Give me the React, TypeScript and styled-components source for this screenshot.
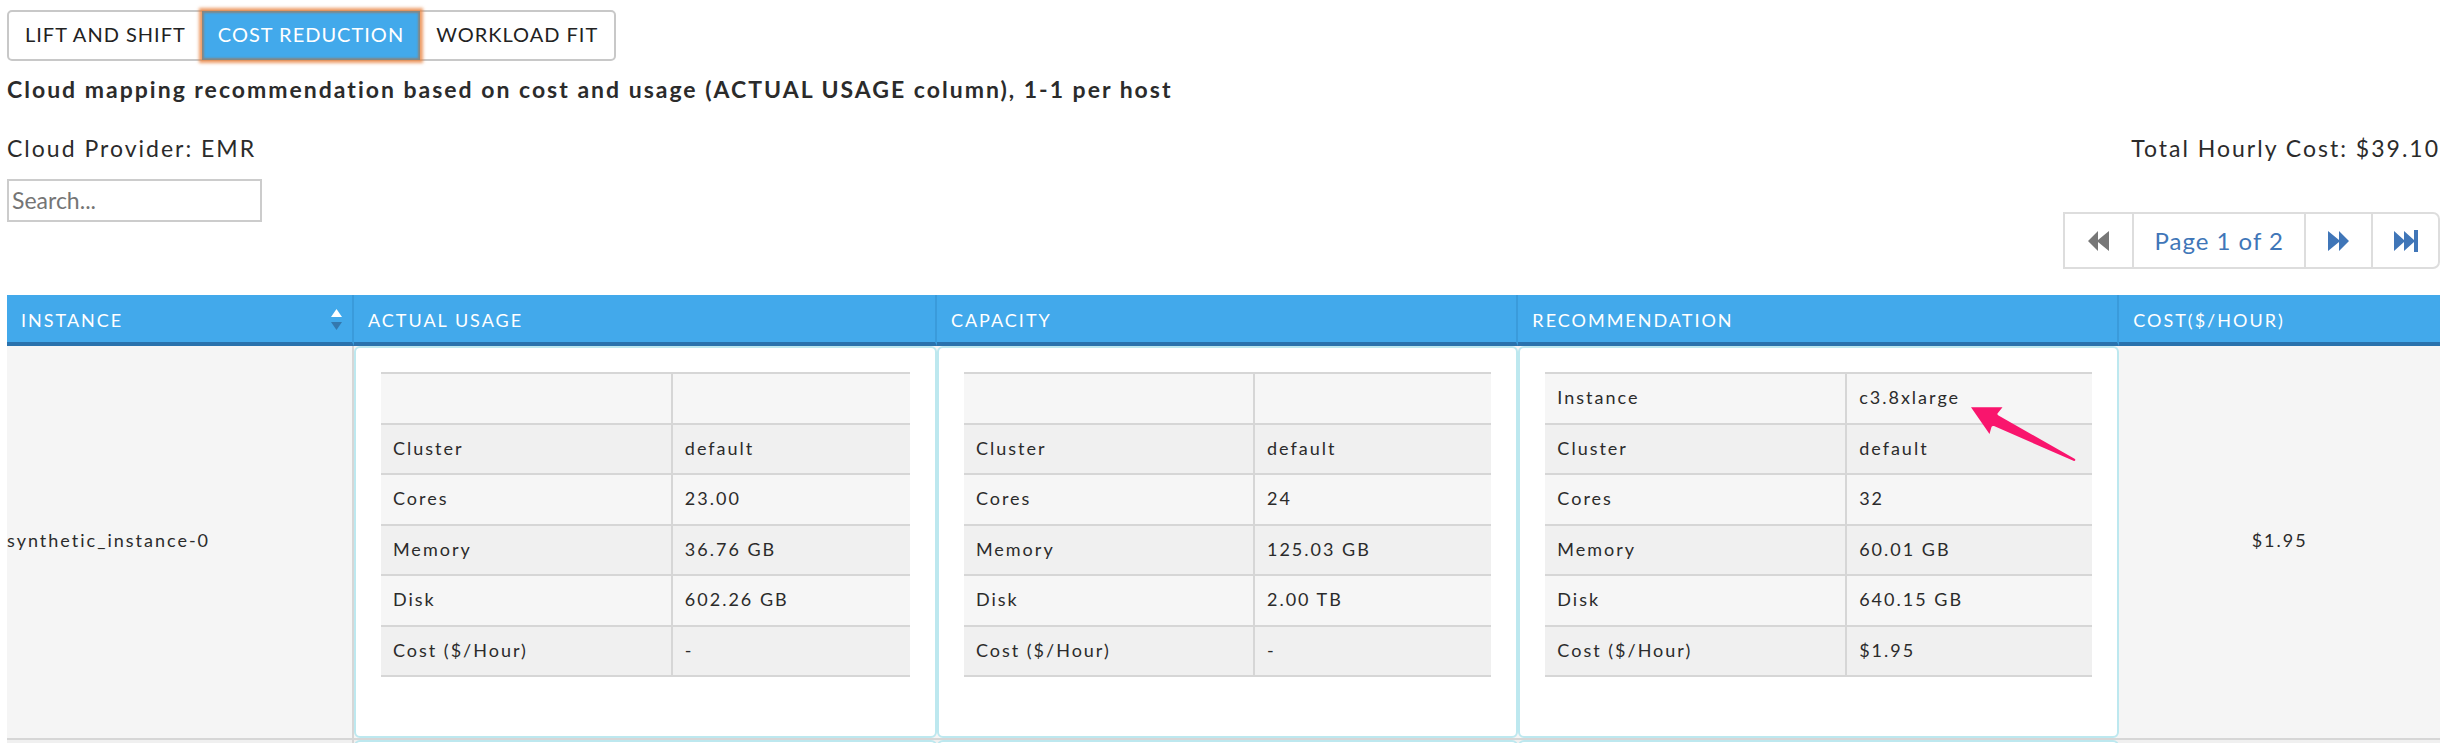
import React from "react";
import styled, { createGlobalStyle } from "styled-components";

const GlobalStyle = createGlobalStyle`
  *, *::before, *::after { box-sizing: border-box; }
  body {
    margin: 0;
    background: #fff;
    color: #2b2b2b;
    font-family: Lato, "Open Sans", sans-serif;
    font-size: 23px;
  }
`;

const Page = styled.main`
  height: 100vh;
  overflow: hidden;
  padding: 10px 8px 0 7px;
  letter-spacing: 2px;
`;

const Tabs = styled.div`
  display: inline-flex;
  height: 51px;
  border: 2px solid #c8c8c8;
  border-radius: 5px;
`;

const Tab = styled.button<{ $active?: boolean }>`
  position: relative;
  margin: ${(p) => (p.$active ? "-1px 0" : "0")};
  padding: 0 16px 3px;
  border: 0;
  background: ${(p) => (p.$active ? "#42a9eb" : "transparent")};
  color: ${(p) => (p.$active ? "#fff" : "#222")};
  font: inherit;
  font-size: 20px;
  letter-spacing: 1px;
  box-shadow: ${(p) =>
    p.$active ? "0 0 3px 3px rgba(232, 132, 66, 0.8), inset 0 0 2px 2px rgba(140, 130, 120, 0.9)" : "none"};
`;

const Heading = styled.h1`
  margin: 12px 0 0;
  font-size: 23px;
  line-height: 32px;
  font-weight: 700;
`;

const Summary = styled.div`
  display: flex;
  justify-content: space-between;
  margin-top: 27px;
  line-height: 32px;
`;

const Toolbar = styled.div`
  display: flex;
  justify-content: space-between;
  align-items: flex-start;
  margin-top: 15px;
`;

const Search = styled.input`
  width: 255px;
  height: 43px;
  padding: 0 3px 2px;
  border: 2px solid #ccc;
  font: inherit;
  &::placeholder { color: #757575; opacity: 1; }
`;

const Pager = styled.nav`
  display: flex;
  height: 57px;
  margin-top: 33px;
  border: 2px solid #ddd;
  border-radius: 0 7px 7px 0;
`;

const PagerItem = styled.button<{ $muted?: boolean }>`
  display: flex;
  align-items: center;
  justify-content: center;
  min-width: 67px;
  padding: 0 20px;
  border: 0;
  border-left: 2px solid #ddd;
  background: transparent;
  color: ${(p) => (p.$muted ? "#777" : "#4076b8")};
  font: inherit;
  font-size: 24px;
  letter-spacing: 1px;
  &:first-child { border-left: 0; }
`;

const PagerIcon = styled.svg`
  display: block;
  fill: currentColor;
`;

const Grid = styled.table`
  width: 100%;
  margin-top: 26px;
  table-layout: fixed;
  border-collapse: separate;
  border-spacing: 0;
  font-size: 18px;
`;

const Col = styled.col<{ $share: string }>`
  width: ${(p) => p.$share};
`;

const HeadCell = styled.th`
  height: 51px;
  padding: 2px 10px 0 14px;
  border-right: 2px solid #3a9bdb;
  border-bottom: 4px solid #2a72ad;
  background: #42a9eb;
  color: #fff;
  font-weight: 400;
  text-align: left;
  text-transform: uppercase;
  &:last-child { border-right: 0; }
`;

const HeadLabel = styled.div`
  display: flex;
  justify-content: space-between;
  align-items: center;
`;

const BodyCell = styled.td<{ $align?: string; $ruled?: boolean; $alt?: boolean }>`
  height: 394px;
  padding: 0;
  background: ${(p) => (p.$alt ? "#f0f0f0" : "#f5f5f5")};
  border-bottom: 2px solid #d6d6d6;
  border-right: ${(p) => (p.$ruled ? "2px solid #d6d6d6" : "0")};
  text-align: ${(p) => p.$align || "left"};
`;

const CellText = styled.div`
  padding-bottom: 4px;
`;

const Card = styled.div`
  height: 392px;
  padding: 24px 25px 0;
  background: #fff;
  border: 2px solid #bde8ef;
  border-radius: 6px;
`;

const Specs = styled.table`
  width: 100%;
  height: 305px;
  table-layout: fixed;
  border-collapse: collapse;
`;

const SpecRow = styled.tr`
  height: 50px;
  background: #f6f6f6;
  border-top: 2px solid #d6d6d6;
  &:nth-child(even) { background: #f0f0f0; }
  &:last-child { border-bottom: 2px solid #d6d6d6; }
`;

const SpecName = styled.th`
  width: 55%;
  padding: 0 12px 2px;
  border-right: 2px solid #d6d6d6;
  font-weight: 400;
  text-align: left;
`;

const SpecValue = styled.td`
  padding: 0 12px 2px;
`;

const ValueWithPointer = styled.div`
  position: relative;
`;

const Pointer = styled.svg`
  position: absolute;
  left: 111px;
  top: 20px;
`;

type Spec = [string, string];
interface Row {
  instance: string;
  cost: string;
  specs: Spec[][];
}

const columns = [
  { title: "Instance", share: "14.26%", sortable: true },
  { title: "Actual Usage", share: "23.96%" },
  { title: "Capacity", share: "23.9%" },
  { title: "Recommendation", share: "24.7%" },
  { title: "Cost($/Hour)", share: "13.18%" },
];

const rows: Row[] = [
  {
    instance: "synthetic_instance-0",
    cost: "$1.95",
    specs: [
      [["", ""], ["Cluster", "default"], ["Cores", "23.00"], ["Memory", "36.76 GB"], ["Disk", "602.26 GB"], ["Cost ($/Hour)", "-"]],
      [["", ""], ["Cluster", "default"], ["Cores", "24"], ["Memory", "125.03 GB"], ["Disk", "2.00 TB"], ["Cost ($/Hour)", "-"]],
      [["Instance", "c3.8xlarge"], ["Cluster", "default"], ["Cores", "32"], ["Memory", "60.01 GB"], ["Disk", "640.15 GB"], ["Cost ($/Hour)", "$1.95"]],
    ],
  },
  { instance: "", cost: "", specs: [[], [], []] },
];

const SortIcon = () => (
  <svg width="11" height="21" viewBox="0 0 11 21" aria-hidden="true">
    <path d="M5.500 0 11 8H0z" fill="#fff" />
    <path d="M0 13h11l-5.500 8z" fill="#3478ae" />
  </svg>
);

const SpecTable = ({ specs }: { specs: Spec[] }) => (
  <Specs>
    <tbody>
      {specs.map(([name, value], i) => (
        <SpecRow key={i}>
          <SpecName scope="row">{name}</SpecName>
          <SpecValue>
            {name === "Instance" ? (
              <ValueWithPointer>
                {value}
                <Pointer width="106" height="56" viewBox="0 0 106 56" aria-hidden="true">
                  <path
                    d="M1 1.300H32.500L27.500 7.500Q27 8.500 28.500 9.500L105 53Q106 54.500 104 55L24 20Q22 19.500 21.500 21L19.500 28z"
                    fill="#f9156d"
                  />
                </Pointer>
              </ValueWithPointer>
            ) : (
              value
            )}
          </SpecValue>
        </SpecRow>
      ))}
    </tbody>
  </Specs>
);

export default function App() {
  return (
    <>
      <GlobalStyle />
      <Page>
        <Tabs>
          <Tab type="button">LIFT AND SHIFT</Tab>
          <Tab type="button" $active>COST REDUCTION</Tab>
          <Tab type="button">WORKLOAD FIT</Tab>
        </Tabs>
        <Heading>Cloud mapping recommendation based on cost and usage (ACTUAL USAGE column), 1-1 per host</Heading>
        <Summary>
          <span>Cloud Provider: EMR</span>
          <span>Total Hourly Cost: $39.10</span>
        </Summary>
        <Toolbar>
          <Search type="text" placeholder="Search..." aria-label="Search" />
          <Pager aria-label="Pagination">
            <PagerItem type="button" $muted aria-label="Previous page">
              <PagerIcon width="21" height="20" viewBox="0 0 21 20"><path d="M0 10 10 0V9L21 0V20L10 11V20z" /></PagerIcon>
            </PagerItem>
            <PagerItem type="button">Page 1 of 2</PagerItem>
            <PagerItem type="button" aria-label="Next page">
              <PagerIcon width="21" height="20" viewBox="0 0 21 20"><path d="M21 10 11 0V9L0 0V20L11 11V20z" /></PagerIcon>
            </PagerItem>
            <PagerItem type="button" aria-label="Last page">
              <PagerIcon width="24" height="22" viewBox="0 0 24 22"><path d="M0 1 10 10V1L20 10V0H24V22H20V12L10 21V12L0 21z" /></PagerIcon>
            </PagerItem>
          </Pager>
        </Toolbar>
        <Grid>
          <colgroup>
            {columns.map((c) => <Col key={c.title} $share={c.share} />)}
          </colgroup>
          <thead>
            <tr>
              {columns.map((c) => (
                <HeadCell key={c.title} scope="col">
                  <HeadLabel>{c.title}{c.sortable && <SortIcon />}</HeadLabel>
                </HeadCell>
              ))}
            </tr>
          </thead>
          <tbody>
            {rows.map((row, i) => (
              <tr key={i}>
                <BodyCell $ruled $alt={i % 2 === 1}><CellText>{row.instance}</CellText></BodyCell>
                {row.specs.map((specs, j) => (
                  <BodyCell key={j} $alt={i % 2 === 1}>
                    <Card>{specs.length > 0 && <SpecTable specs={specs} />}</Card>
                  </BodyCell>
                ))}
                <BodyCell $align="center" $alt={i % 2 === 1}><CellText>{row.cost}</CellText></BodyCell>
              </tr>
            ))}
          </tbody>
        </Grid>
      </Page>
    </>
  );
}
